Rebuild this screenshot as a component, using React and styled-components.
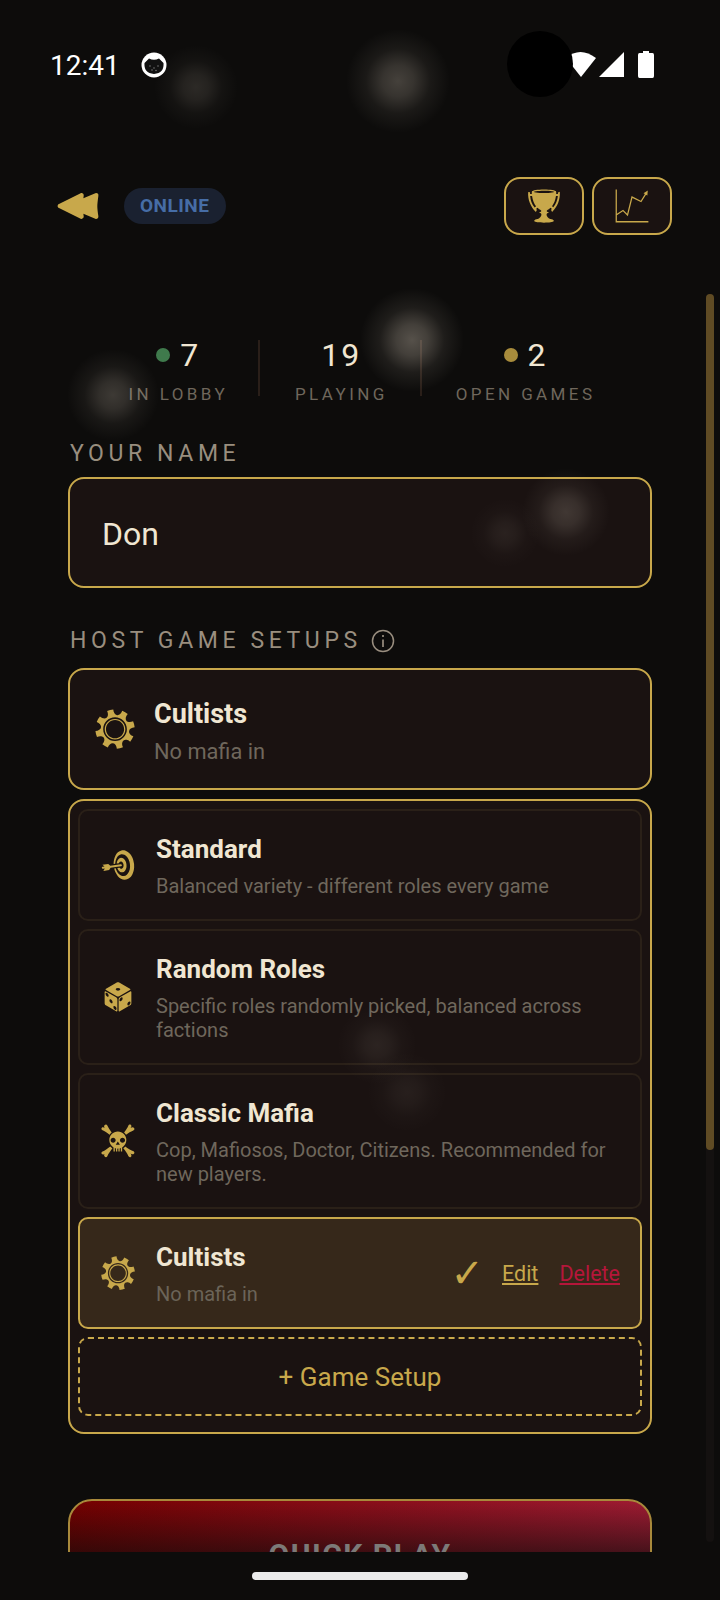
import React from 'react'
import styled, { createGlobalStyle } from 'styled-components'
import {
  GiFastBackwardButton,
  GiTrophy,
  GiChart,
  GiCog,
  GiBullseye,
  GiPerspectiveDiceSixFacesOne,
  GiSkullCrossedBones,
} from 'react-icons/gi'

const gold = '#c8a84b'
const panel = '#1a1211'
const cream = '#f0e6d2'
const muted = '#6f675c'

const GlobalStyle = createGlobalStyle`
  html, body {
    margin: 0;
    background: #0d0c0b;
    font-family: Roboto, "Liberation Sans", sans-serif;
  }
  * { box-sizing: border-box; }
`

const setups = [
  { icon: <GiBullseye />, name: 'Standard', desc: 'Balanced variety - different roles every game' },
  { icon: <GiPerspectiveDiceSixFacesOne />, name: 'Random Roles', desc: 'Specific roles randomly picked, balanced across factions' },
  { icon: <GiSkullCrossedBones />, name: 'Classic Mafia', desc: 'Cop, Mafiosos, Doctor, Citizens. Recommended for new players.' },
]

const stats = [
  { value: 7, label: 'IN LOBBY', dot: '#3f7a4c', pad: '0 30px 0 37px' },
  { value: 19, label: 'PLAYING', pad: '0 32px 0 35px' },
  { value: 2, label: 'OPEN GAMES', dot: '#a88c3c', pad: '0 33px 0 34px' },
]

// floating dust spots, x/y are their centres on the screen
const spots = [
  { x: 196, y: 87, size: 84, alpha: 0.13 },
  { x: 398, y: 81, size: 104, alpha: 0.23 },
  { x: 412, y: 340, size: 104, alpha: 0.3 },
  { x: 113, y: 395, size: 92, alpha: 0.2 },
  { x: 566, y: 512, size: 88, alpha: 0.17 },
  { x: 505, y: 533, size: 70, alpha: 0.07 },
  { x: 377, y: 1045, size: 80, alpha: 0.08 },
  { x: 407, y: 1092, size: 80, alpha: 0.06 },
]

const App = () => (
  <Screen>
    <GlobalStyle />

    <StatusBar>
      <Time>12:41</Time>
      <CatBadge viewBox="0 0 26 26">
        <circle cx="13" cy="13" r="12.5" fill="#fff" />
        <path d="M3.500 11 L8 6.500 Q13 9 18 6.500 L22.500 11 Q23.500 21 13 22 Q2.500 21 3.500 11 Z" fill="#111" />
        <circle cx="9" cy="14" r="0.7" fill="#888" />
        <circle cx="13" cy="16" r="0.7" fill="#888" />
        <circle cx="17" cy="14" r="0.7" fill="#888" />
        <circle cx="11" cy="18" r="0.7" fill="#888" />
        <circle cx="15" cy="18.5" r="0.7" fill="#888" />
      </CatBadge>
      <StatusIcons>
        <svg width="30" height="26" viewBox="0 0 30 26">
          <path d="M0 7 Q14 -5 30 7 L15 26 Z" fill="#fff" />
        </svg>
        <svg width="25" height="26" viewBox="0 0 25 26">
          <path d="M25 1 V26 H0 Z" fill="#fff" />
        </svg>
        <svg width="16" height="27" viewBox="0 0 16 27">
          <path d="M5 0 H11 V2 H14.500 Q16 2 16 4 V25 Q16 27 14.500 27 H1.500 Q0 27 0 25 V4 Q0 2 1.500 2 H5 Z" fill="#fff" />
        </svg>
      </StatusIcons>
    </StatusBar>
    <CameraHole />

    <Header>
      <BackButton><GiFastBackwardButton /></BackButton>
      <OnlinePill>ONLINE</OnlinePill>
      <HeaderActions>
        <IconButton><GiTrophy /></IconButton>
        <IconButton><GiChart /></IconButton>
      </HeaderActions>
    </Header>

    <Content>
      <StatsRow>
        {stats.map((item, index) => (
          <Stat key={index} $first={index === 0} $pad={item.pad}>
            <StatValue>
              {item.dot && <StatDot $color={item.dot} />}
              {item.value}
            </StatValue>
            <StatLabel>{item.label}</StatLabel>
          </Stat>
        ))}
      </StatsRow>

      <SectionLabel>YOUR NAME</SectionLabel>
      <NameInput defaultValue="Don" />

      <SetupsLabel>
        HOST GAME SETUPS
        <InfoIcon viewBox="0 0 24 24">
          <circle cx="12" cy="12" r="10.500" fill="none" stroke="currentColor" strokeWidth="1.500" />
          <path d="M12 10.500 V18 M12 6 V8" stroke="currentColor" strokeWidth="1.700" />
        </InfoIcon>
      </SetupsLabel>

      <CurrentCard>
        <CurrentIcon><GiCog /></CurrentIcon>
        <div>
          <CurrentName>Cultists</CurrentName>
          <CurrentDesc>No mafia in</CurrentDesc>
        </div>
      </CurrentCard>

      <SetupList>
        {setups.map((item, index) => (
          <SetupRow key={index}>
            <SetupIcon>{item.icon}</SetupIcon>
            <SetupText>
              <SetupName>{item.name}</SetupName>
              <SetupDesc>{item.desc}</SetupDesc>
            </SetupText>
          </SetupRow>
        ))}

        <SetupRow $selected>
          <SetupIcon><GiCog /></SetupIcon>
          <SetupText>
            <SetupName>Cultists</SetupName>
            <SetupDesc $dim>No mafia in</SetupDesc>
          </SetupText>
          <CheckMark>✓</CheckMark>
          <RowLink>Edit</RowLink>
          <RowLink $danger>Delete</RowLink>
        </SetupRow>

        <AddSetup>+ Game Setup</AddSetup>
      </SetupList>

      <QuickPlay>QUICK PLAY</QuickPlay>
    </Content>

    <NavBar><HomePill /></NavBar>

    <ScrollTrack><ScrollThumb /></ScrollTrack>

    {spots.map((spot, index) => (
      <Spot key={index} $x={spot.x} $y={spot.y} $size={spot.size} $alpha={spot.alpha} />
    ))}
  </Screen>
)

export default App

const Screen = styled.div`
  position: relative;
  width: 720px;
  height: 1600px;
  display: flex;
  flex-direction: column;
  overflow: hidden;
  background: #0d0c0b;
`

const StatusBar = styled.div`
  height: 130px;
  display: flex;
  align-items: flex-start;
  padding: 51px 66px 0 50px;
`

const Time = styled.span`
  font-size: 28px;
  line-height: 30px;
  color: #fff;
`

const CatBadge = styled.svg`
  width: 26px;
  height: 26px;
  margin: 1px 0 0 21px;
`

const StatusIcons = styled.div`
  margin-left: auto;
  display: flex;
  gap: 3px;
  align-items: flex-start;

  svg:last-child { margin-left: 11px; }
`

const CameraHole = styled.div`
  position: absolute;
  left: 507px;
  top: 31px;
  width: 66px;
  height: 66px;
  border-radius: 50%;
  background: #000;
`

const Header = styled.header`
  height: 58px;
  margin-top: 47px;
  display: flex;
  align-items: center;
  padding: 0 48px 0 56px;
`

const BackButton = styled.div`
  display: flex;
  font-size: 44px;
  color: ${gold};
`

const OnlinePill = styled.span`
  margin-left: 24px;
  padding: 0 17px 0 16px;
  height: 36px;
  line-height: 36px;
  border-radius: 18px;
  background: #1a2130;
  color: #466da6;
  font-size: 19px;
  font-weight: 700;
  letter-spacing: 0.5px;
`

const HeaderActions = styled.div`
  margin-left: auto;
  display: flex;
  gap: 8px;
`

const IconButton = styled.div`
  width: 80px;
  height: 58px;
  display: flex;
  align-items: center;
  justify-content: center;
  border: 2px solid ${gold};
  border-radius: 16px;
  background: ${panel};
  color: ${gold};
  font-size: 36px;
`

const Content = styled.main`
  flex: 1;
  min-height: 0;
  overflow: hidden;
  padding: 105px 68px 0;
`

const StatsRow = styled.div`
  display: flex;
  justify-content: center;
  margin-bottom: 45px;
`

const Stat = styled.div`
  height: 56px;
  padding: ${({ $pad }) => $pad};
  display: flex;
  flex-direction: column;
  align-items: center;
  border-left: ${({ $first }) => ($first ? 'none' : '2px solid #2a1f19')};
`

const StatValue = styled.div`
  display: flex;
  align-items: center;
  gap: 10px;
  height: 30px;
  font-size: 32px;
  letter-spacing: 2px;
  color: ${cream};
`

const StatDot = styled.span`
  width: 14px;
  height: 14px;
  border-radius: 50%;
  background: ${({ $color }) => $color};
`

const StatLabel = styled.div`
  margin-top: 13px;
  font-size: 17px;
  line-height: 22px;
  letter-spacing: 3.400px;
  white-space: nowrap;
  color: ${muted};
`

const SectionLabel = styled.div`
  margin: 0 0 10px 2px;
  font-size: 23px;
  line-height: 26px;
  letter-spacing: 4.600px;
  color: #998e7f;
`

const NameInput = styled.input`
  display: block;
  width: 100%;
  height: 111px;
  padding: 3px 32px 0;
  border: 2px solid ${gold};
  border-radius: 16px;
  outline: none;
  background: ${panel};
  color: ${cream};
  font-family: inherit;
  font-size: 32px;
`

const SetupsLabel = styled(SectionLabel)`
  margin: 40px 0 14px 2px;
  display: flex;
  align-items: center;
  gap: 9px;
`

const InfoIcon = styled.svg`
  width: 24px;
  height: 24px;
`

const CurrentCard = styled.div`
  height: 122px;
  display: flex;
  align-items: center;
  padding: 0 24px;
  gap: 18px;
  border: 2px solid ${gold};
  border-radius: 16px;
  background: ${panel};
`

const CurrentIcon = styled.div`
  display: flex;
  font-size: 42px;
  color: ${gold};
`

const CurrentName = styled.div`
  padding-top: 2px;
  font-size: 27px;
  line-height: 36px;
  font-weight: 700;
  color: ${cream};
`

const CurrentDesc = styled.div`
  margin-top: 7px;
  font-size: 21.800px;
  line-height: 26px;
  color: ${muted};
`

const SetupList = styled.div`
  margin-top: 9px;
  padding: 8px 8px 16px;
  display: flex;
  flex-direction: column;
  gap: 8px;
  border: 2px solid ${gold};
  border-radius: 16px;
  background: ${panel};
`

const SetupRow = styled.div`
  display: flex;
  align-items: center;
  padding: 21px 20px 21px;
  border: 2px solid ${({ $selected }) => ($selected ? gold : '#2a2018')};
  border-radius: 10px;
  background: ${({ $selected }) => ($selected ? '#36281a' : panel)};
`

const SetupIcon = styled.div`
  flex: none;
  width: 36px;
  margin-right: 20px;
  display: flex;
  justify-content: center;
  font-size: 38px;
  color: ${gold};
`

const SetupText = styled.div`
  flex: 1;
  min-width: 0;
`

const SetupName = styled.div`
  font-size: 26px;
  line-height: 35px;
  font-weight: 700;
  color: ${cream};
`

const SetupDesc = styled.div`
  margin-top: 7px;
  font-size: 20px;
  line-height: 24px;
  color: ${({ $dim }) => ($dim ? '#6b6458' : muted)};
`

const CheckMark = styled.span`
  font-family: "DejaVu Sans", sans-serif;
  font-size: 40px;
  line-height: 40px;
  color: ${gold};
`

const RowLink = styled.a`
  margin-left: ${({ $danger }) => ($danger ? '21px' : '18px')};
  font-size: 21.500px;
  text-decoration: underline;
  color: ${({ $danger }) => ($danger ? '#b5163a' : gold)};
`

const AddSetup = styled.div`
  height: 79px;
  display: flex;
  align-items: center;
  justify-content: center;
  border: 2px dashed ${gold};
  border-radius: 10px;
  font-size: 26px;
  color: ${gold};
`

const QuickPlay = styled.div`
  margin-top: 65px;
  height: 110px;
  display: flex;
  align-items: center;
  justify-content: center;
  border: 2px solid #a8893b;
  border-radius: 24px;
  background:
    linear-gradient(180deg, rgba(13, 12, 11, 0) 0%, rgba(13, 12, 11, 0.6) 48%, rgba(13, 12, 11, 0.85) 100%),
    linear-gradient(100deg, #750000 0%, #a01c34 100%);
  font-size: 30px;
  font-weight: 700;
  letter-spacing: 1.500px;
  color: #7c7a78;
`

const NavBar = styled.div`
  flex: none;
  height: 48px;
  padding-top: 20px;
  display: flex;
  justify-content: center;
  background: #0d0c0b;
  z-index: 1;
`

const HomePill = styled.div`
  width: 216px;
  height: 8px;
  border-radius: 4px;
  background: #ebebeb;
`

const ScrollTrack = styled.div`
  position: absolute;
  left: 706px;
  top: 294px;
  width: 8px;
  height: 1248px;
  border-radius: 4px;
  background: #141110;
`

const ScrollThumb = styled.div`
  height: 856px;
  border-radius: 4px;
  background: #5f4b24;
`

const Spot = styled.div`
  position: absolute;
  left: ${({ $x, $size }) => $x - $size / 2}px;
  top: ${({ $y, $size }) => $y - $size / 2}px;
  width: ${({ $size }) => $size}px;
  height: ${({ $size }) => $size}px;
  border-radius: 50%;
  pointer-events: none;
  background: radial-gradient(circle closest-side, rgba(255, 240, 220, ${({ $alpha }) => $alpha}) 0%, rgba(255, 240, 220, ${({ $alpha }) => $alpha * 0.75}) 30%, rgba(255, 240, 220, ${({ $alpha }) => $alpha * 0.25}) 62%, rgba(255, 240, 220, 0) 100%);
`
